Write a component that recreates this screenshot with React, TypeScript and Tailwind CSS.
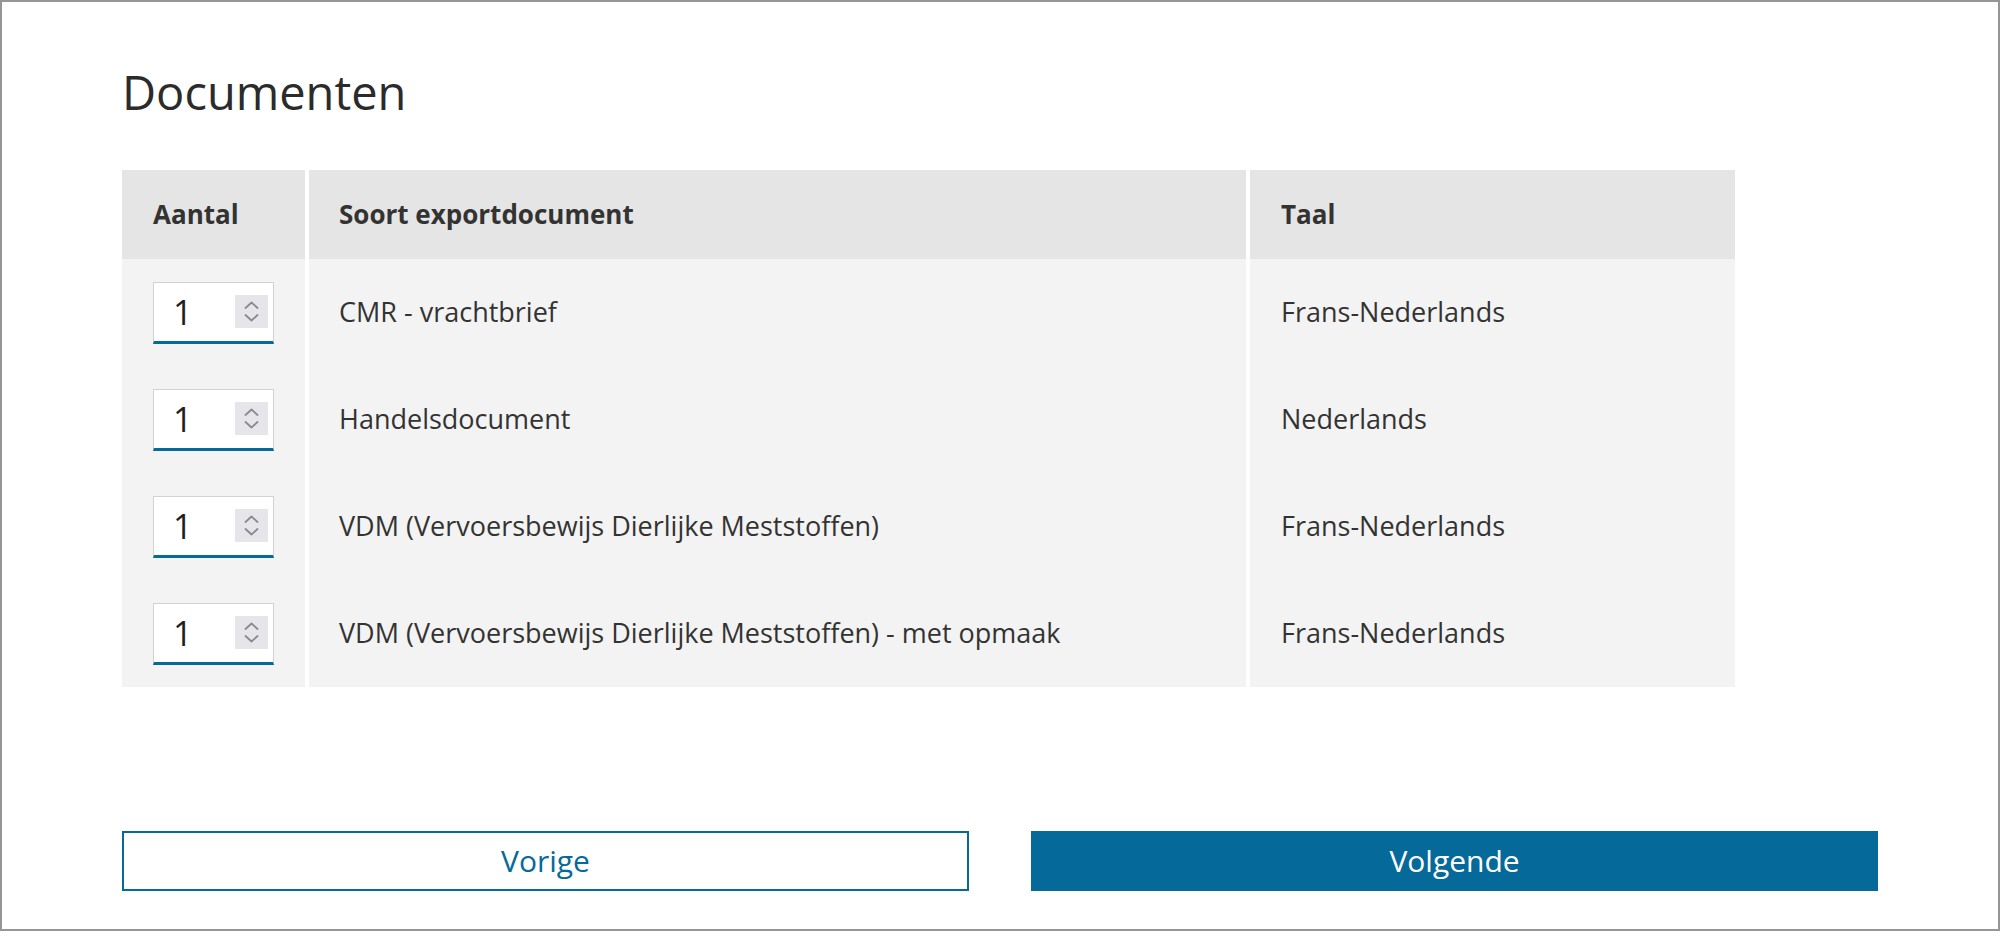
import React from "react";

type DocRow = {
  aantal: number;
  soort: string;
  taal: string;
};

const rows: DocRow[] = [
  { aantal: 1, soort: "CMR - vrachtbrief", taal: "Frans-Nederlands" },
  { aantal: 1, soort: "Handelsdocument", taal: "Nederlands" },
  {
    aantal: 1,
    soort: "VDM (Vervoersbewijs Dierlijke Meststoffen)",
    taal: "Frans-Nederlands",
  },
  {
    aantal: 1,
    soort: "VDM (Vervoersbewijs Dierlijke Meststoffen) - met opmaak",
    taal: "Frans-Nederlands",
  },
];

function Spinner() {
  return (
    <span className="flex h-[33px] w-[33px] items-center justify-center bg-[#e6e6ea]">
      <svg width="33" height="33" viewBox="0 0 33 33" fill="none">
        <path
          d="M10.5 13 L16.5 7.5 L22.5 13"
          stroke="#8a8a8e"
          strokeWidth="1.8"
          strokeLinecap="round"
          strokeLinejoin="round"
        />
        <path
          d="M10.5 20 L16.5 25.5 L22.5 20"
          stroke="#8a8a8e"
          strokeWidth="1.8"
          strokeLinecap="round"
          strokeLinejoin="round"
        />
      </svg>
    </span>
  );
}

function NumberField({ value }: { value: number }) {
  return (
    <div className="flex h-[62px] w-[121px] items-center justify-between border border-b-[3px] border-[#d2d2d2] border-b-[#05699a] bg-white pl-[19px] pr-[5px]">
      <span className="text-[34px] leading-none text-[#1f1f1f]">{value}</span>
      <Spinner />
    </div>
  );
}

export default function App() {
  return (
    <div className="flex h-[931px] w-full flex-col border-2 border-[#969696] bg-white px-[120px] pt-[60px] font-['Open_Sans',sans-serif] text-[#333332]">
      <h1 className="text-[47px] leading-[60px] font-normal text-[#2b2b2b]">
        Documenten
      </h1>

      <div className="mt-[48px] grid w-[1613px] grid-cols-[183px_937px_485px] gap-x-[4px]">
        <div className="flex h-[89px] items-center bg-[#e5e5e6] px-[31px] text-[26px] font-bold">
          Aantal
        </div>
        <div className="flex h-[89px] items-center bg-[#e5e5e6] px-[30px] text-[26px] font-bold">
          Soort exportdocument
        </div>
        <div className="flex h-[89px] items-center bg-[#e5e5e6] px-[31px] text-[26px] font-bold">
          Taal
        </div>

        {rows.map((row, i) => (
          <React.Fragment key={i}>
            <div className="flex h-[107px] items-center bg-[#f3f3f4] px-[31px]">
              <NumberField value={row.aantal} />
            </div>
            <div className="flex h-[107px] items-center bg-[#f3f3f4] px-[30px] text-[27px]">
              {row.soort}
            </div>
            <div className="flex h-[107px] items-center bg-[#f3f3f4] px-[31px] text-[27px]">
              {row.taal}
            </div>
          </React.Fragment>
        ))}
      </div>

      <div className="mt-[144px] grid grid-cols-2 gap-x-[62px]">
        <button
          type="button"
          className="h-[60px] border-2 border-[#05699a] bg-white text-[30px] leading-none text-[#05699a]"
        >
          Vorige
        </button>
        <button
          type="button"
          className="h-[60px] bg-[#05699a] text-[30px] leading-none text-white"
        >
          Volgende
        </button>
      </div>
    </div>
  );
}
